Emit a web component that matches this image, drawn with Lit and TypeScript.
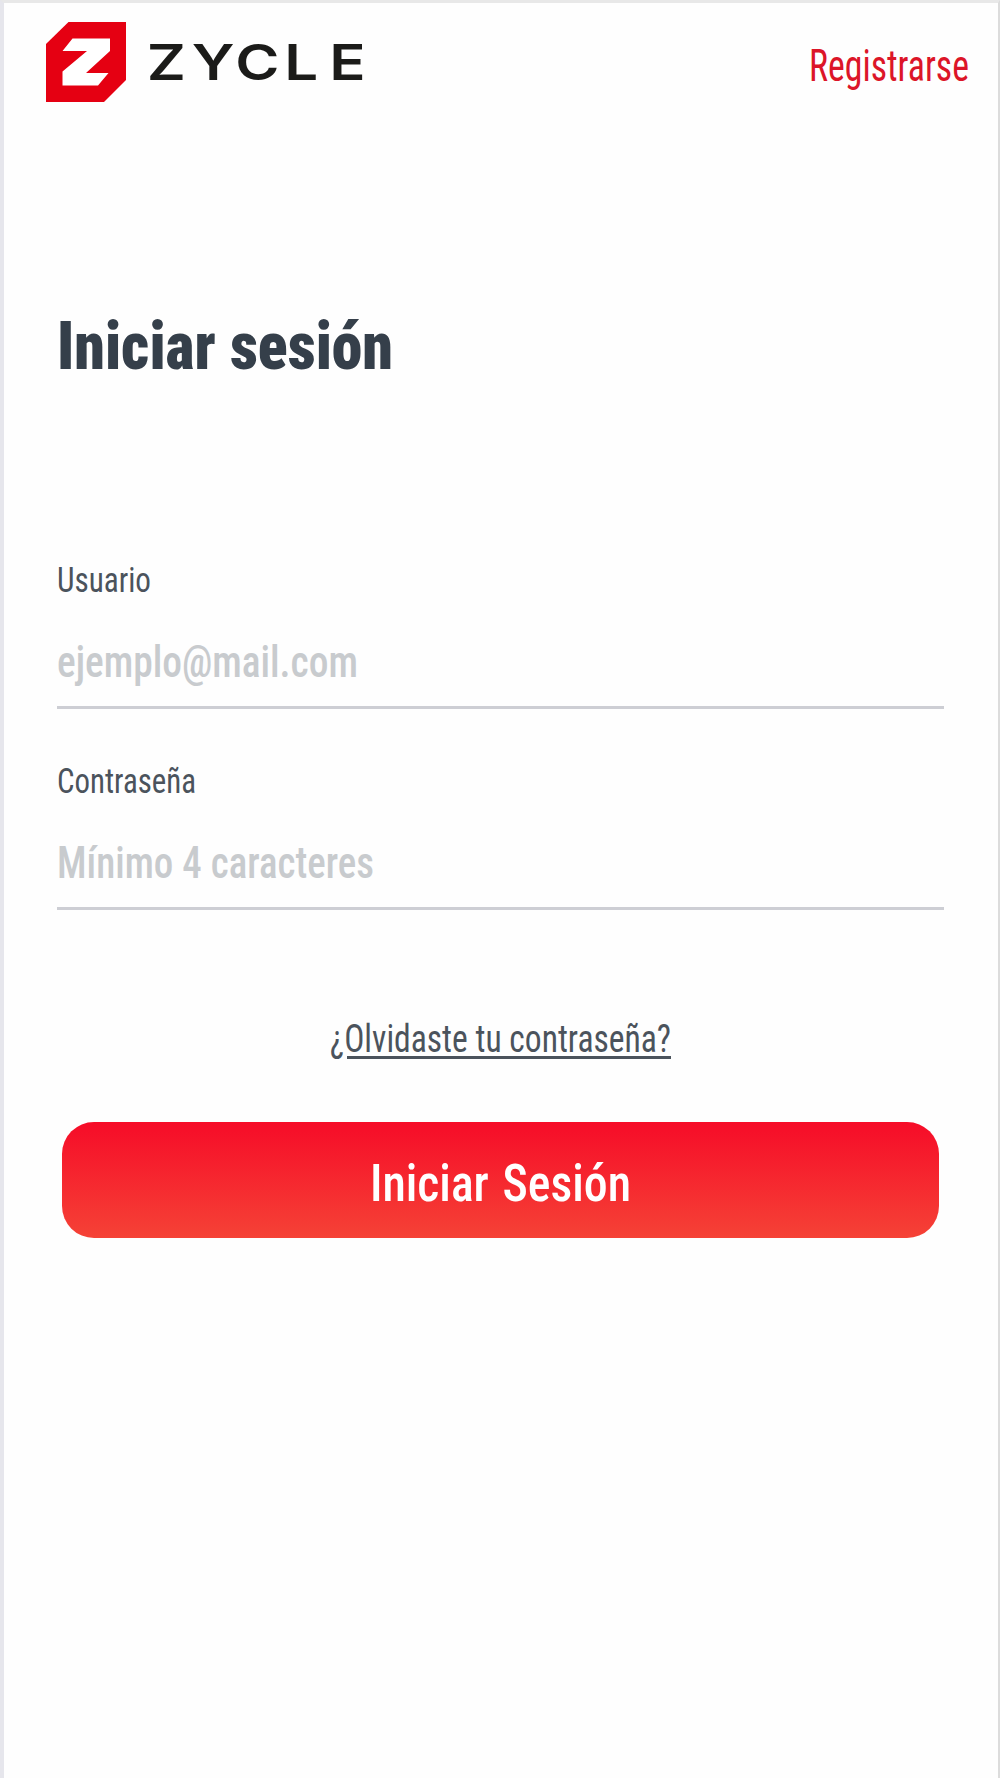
import { LitElement, html, svg, css } from "lit";
import { customElement, property } from "lit/decorators.js";

/** A line of condensed text set to an exact measure. */
@customElement("condensed-text")
class CondensedText extends LitElement {
  @property() text = "";
  @property({ type: Number }) measure = 100;
  @property({ type: Number }) size = 40;
  @property({ type: Number }) weight = 400;
  @property({ type: Number }) space = 0;

  static styles = css`
    :host { display: block; flex: none; }
    svg { display: block; overflow: visible; }
    text {
      font-family: Roboto, "Liberation Sans", sans-serif;
      font-stretch: 75%;
      fill: currentColor;
    }
  `;

  render() {
    return html`<svg width=${this.measure} height=${this.size}>
      ${svg`<text x="0" y=${this.size * 0.8} font-size=${this.size} font-weight=${this.weight}
        word-spacing=${this.space} textLength=${this.measure} lengthAdjust="spacingAndGlyphs">${this.text}</text>`}
    </svg>`;
  }
}

@customElement("zycle-logo")
class ZycleLogo extends LitElement {
  static styles = css`
    :host { display: block; }
    svg { display: block; overflow: visible; }
    .word { font-family: Inter, sans-serif; font-size: 50px; font-weight: 600; fill: #1b1b19; }
  `;

  render() {
    return html`<svg width="322" height="80" viewBox="0 0 322 80" aria-label="Zycle">
      <path fill="#e50012" d="M22.5 0H80V58L58 80H0V22Z" />
      <path fill="#fff" d="M26.500 16.500H64V29L40 51H62.500L52 63.500H16.500V49.500L41 29H16.500Z" />
      <text class="word" transform="scale(1.2 1)" x="84 121.500 157.700 198.500 236" y="58">ZYCLE</text>
    </svg>`;
  }
}

@customElement("app-root")
class AppRoot extends LitElement {
  static styles = css`
    :host { display: block; }
    .screen {
      box-sizing: border-box;
      height: 1778px;
      display: flex;
      flex-direction: column;
      background: #fefefe;
      border-style: solid;
      border-color: #e8e8e8 #dcdcdc #e6e6ea #e6e6ec;
      border-width: 3px 2px 0 4px;
      color: #363f49;
    }
    header {
      display: flex;
      justify-content: space-between;
      padding: 19px 29px 0 42px;
      height: 80px;
    }
    .register { color: #dc1528; padding-top: 24px; }
    main { display: flex; flex-direction: column; padding: 213px 54px 0 53px; }
    .title { color: #353f4a; }
    .fields { display: flex; flex-direction: column; gap: 56px; padding-top: 182px; }
    .field { display: flex; flex-direction: column; gap: 43px; height: 145px; box-sizing: border-box; border-bottom: 3px solid #cdced4; }
    .label { color: #4b535c; }
    .hint { color: #c8cbce; }
    .forgot { display: flex; align-self: center; position: relative; margin-top: 111px; color: #4b535c; }
    .forgot::after {
      content: "";
      position: absolute;
      left: 17px; right: 0; top: 35px;
      height: 3px;
      background: #4b535c;
    }
    button {
      display: flex;
      align-items: center;
      justify-content: center;
      height: 116px;
      margin: 62px 5px 0;
      padding: 10px 0 0;
      border: 0;
      border-radius: 32px;
      background: linear-gradient(#f60c28, #f54236);
      color: #fff;
    }
  `;

  field(label: string, labelWidth: number, hint: string, hintWidth: number) {
    return html`<div class="field">
      <condensed-text class="label" text=${label} measure=${labelWidth} size="35"></condensed-text>
      <condensed-text class="hint" text=${hint} measure=${hintWidth} size="44" weight="500"></condensed-text>
    </div>`;
  }

  render() {
    return html`<div class="screen">
      <header>
        <zycle-logo></zycle-logo>
        <condensed-text class="register" text="Registrarse" measure="160" size="44"></condensed-text>
      </header>
      <main>
        <condensed-text class="title" text="Iniciar sesión" measure="336" size="67" weight="900"></condensed-text>
        <div class="fields">
          ${this.field("Usuario", 94, "ejemplo@mail.com", 301)}
          ${this.field("Contraseña", 139, "Mínimo 4 caracteres", 317)}
        </div>
        <condensed-text class="forgot" text="¿Olvidaste tu contraseña?" measure="341" size="39"></condensed-text>
        <button>
          <condensed-text text="Iniciar Sesión" measure="261" size="52" weight="500" space="3"></condensed-text>
        </button>
      </main>
    </div>`;
  }
}
